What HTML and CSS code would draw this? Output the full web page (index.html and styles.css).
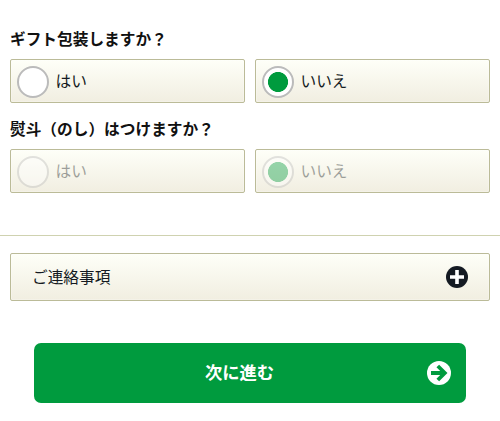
FILE: index.html
```html
<!DOCTYPE html>
<html lang="ja">
<head>
  <meta charset="UTF-8">
  <meta name="viewport" content="width=device-width, initial-scale=1.0">
  <title>ギフト包装</title>
  <link rel="stylesheet" href="styles.css">
</head>
<body>
  <form class="order-form">
    <div class="question">
      <h2>ギフト包装しますか？</h2>
      <div class="choices">
        <label class="choice"><input type="radio" name="gift"><span>はい</span></label>
        <label class="choice"><input type="radio" name="gift" checked><span>いいえ</span></label>
      </div>
    </div>

    <div class="question">
      <h2>熨斗（のし）はつけますか？</h2>
      <div class="choices">
        <label class="choice disabled"><input type="radio" name="noshi" disabled><span>はい</span></label>
        <label class="choice disabled"><input type="radio" name="noshi" checked disabled><span>いいえ</span></label>
      </div>
    </div>

    <div class="contact">
      <div class="accordion">
        <span>ご連絡事項</span>
        <svg width="22" height="22" viewBox="0 0 22 22">
          <circle cx="11" cy="11" r="11" fill="#141a22"/>
          <path d="M11 4v14M4 11h14" stroke="#fff" stroke-width="3.6"/>
        </svg>
      </div>
    </div>

    <button type="button" class="next">
      <span>次に進む</span>
      <svg width="24" height="24" viewBox="0 0 24 24">
        <circle cx="12" cy="12" r="12" fill="#fff"/>
        <path d="M4 12h13M10.8 5l7 7l-7 7" fill="none" stroke="#009b3e" stroke-width="3.8"/>
      </svg>
    </button>
  </form>
</body>
</html>
```
FILE: styles.css
```css
* { margin: 0; padding: 0; box-sizing: border-box; }
body {
  font-family: "Noto Sans CJK JP", sans-serif;
  font-size: 15.7px;
  line-height: 24px;
  color: #141a22;
  background: #fff;
}
.order-form { padding-top: 27px; }
.question {
  padding: 0 10px;
  margin-bottom: 14px;
}
.question h2 {
  font-size: 15.7px;
  font-weight: bold;
  color: #111;
  margin-bottom: 8px;
}
.choices {
  display: flex;
  gap: 10px;
}
.choice, .accordion {
  display: flex;
  align-items: center;
  border: 1px solid #bbbb98;
  border-radius: 2px;
  background: linear-gradient(#fefff8, #f1eee1);
  box-shadow: inset 0 0 0 1px rgba(255,255,255,.25);
}
.choice {
  flex: 1;
  height: 44px;
  padding: 2px 6px 0;
}
.choice span {
  margin: 0 0 2px 6.5px;
}
.choice input {
  appearance: none;
  width: 32px;
  height: 32px;
  border: 2px solid #bbb;
  border-radius: 50%;
  background: #fff;
}
.choice input:checked {
  background: radial-gradient(circle, #009b3e 9.7px, #fff 10.3px);
}
.disabled input, .disabled span { opacity: .4; }

/* ご連絡事項 */
.contact {
  margin-top: 42px;
  padding: 17px 10px 0;
  border-top: 1px solid #cfd2b0;
}
.accordion {
  height: 48px;
  padding: 0 21px;
  justify-content: space-between;
}

.next {
  display: flex;
  align-items: center;
  width: 432px;
  height: 60px;
  margin: 42px auto 0;
  padding: 0 15px;
  border: none;
  border-radius: 7px;
  background: #009b3e;
  color: #fff;
  font-family: inherit;
  font-size: 17.3px;
  font-weight: bold;
  line-height: 24px;
}
.next span {
  flex: 1;
  padding: 0 0 2px 3px;
}
```
